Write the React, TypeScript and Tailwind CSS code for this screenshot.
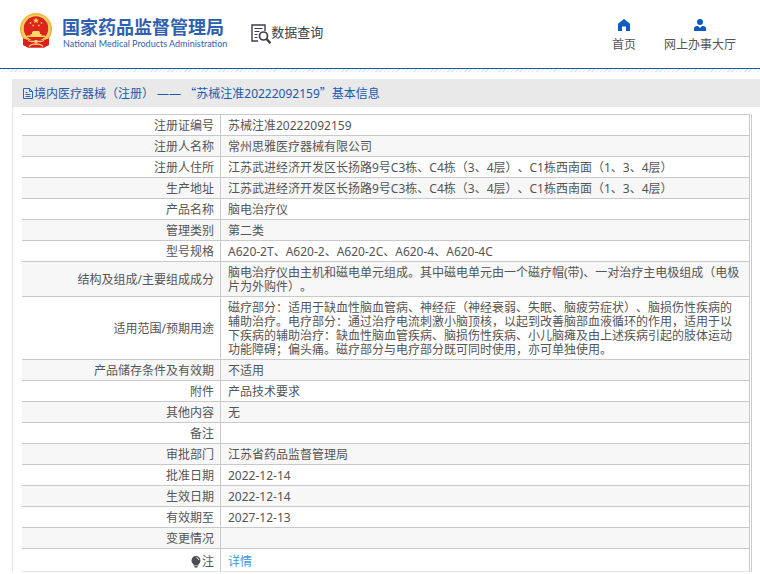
interface Row {
  label: string;
  value: string;
}

const ROWS: Row[] = [
  { label: "注册证编号", value: "苏械注准20222092159" },
  { label: "注册人名称", value: "常州思雅医疗器械有限公司" },
  { label: "注册人住所", value: "江苏武进经济开发区长扬路9号C3栋、C4栋（3、4层）、C1栋西南面（1、3、4层）" },
  { label: "生产地址", value: "江苏武进经济开发区长扬路9号C3栋、C4栋（3、4层）、C1栋西南面（1、3、4层）" },
  { label: "产品名称", value: "脑电治疗仪" },
  { label: "管理类别", value: "第二类" },
  { label: "型号规格", value: "A620-2T、A620-2、A620-2C、A620-4、A620-4C" },
  {
    label: "结构及组成/主要组成成分",
    value: "脑电治疗仪由主机和磁电单元组成。其中磁电单元由一个磁疗帽(带)、一对治疗主电极组成（电极片为外购件）。",
  },
  {
    label: "适用范围/预期用途",
    value:
      "磁疗部分：适用于缺血性脑血管病、神经症（神经衰弱、失眠、脑疲劳症状）、脑损伤性疾病的辅助治疗。电疗部分：通过治疗电流刺激小脑顶核，以起到改善脑部血液循环的作用，适用于以下疾病的辅助治疗：缺血性脑血管疾病、脑损伤性疾病、小儿脑瘫及由上述疾病引起的肢体运动功能障碍；偏头痛。磁疗部分与电疗部分既可同时使用，亦可单独使用。",
  },
  { label: "产品储存条件及有效期", value: "不适用" },
  { label: "附件", value: "产品技术要求" },
  { label: "其他内容", value: "无" },
  { label: "备注", value: "" },
  { label: "审批部门", value: "江苏省药品监督管理局" },
  { label: "批准日期", value: "2022-12-14" },
  { label: "生效日期", value: "2022-12-14" },
  { label: "有效期至", value: "2027-12-13" },
  { label: "变更情况", value: "" },
];

function Emblem() {
  return (
    <svg width="32" height="35" viewBox="0 0 32 35" aria-hidden="true">
      <path d="M3 22h26v10l-5 2.500H8L3 32z" fill="#d9201c" />
      <circle cx="16" cy="16" r="16" fill="#eeb53c" />
      <circle cx="16" cy="16" r="14.4" fill="#f5cf5e" />
      <circle cx="16" cy="15.5" r="12.2" fill="#dc231c" />
      <path d="M16 4.500l.9 2.100 2.200.1-1.700 1.400.6 2.200-2-1.200-2 1.200.6-2.200-1.700-1.400 2.200-.1z" fill="#f7d45c" />
      <g fill="#f3c44c">
        <circle cx="10.5" cy="10" r=".9" />
        <circle cx="21.5" cy="10" r=".9" />
        <circle cx="13.2" cy="12.4" r=".9" />
        <circle cx="18.8" cy="12.4" r=".9" />
      </g>
      <path d="M12 19.500l1-1.600h6l1 1.600v1.500h1.500v1.500H25V24H7v-1.500h3.500V21H12z" fill="#f9d966" />
      <path d="M3 25.500q6 2.500 13 .5 7 2 13-.5l-1 6.500-4 2.500H8L4 32z" fill="#d9201c" />
      <path d="M8 27.500q4 2 8 0 4 2 8 0M9 33.500q3-3.500 7-2 4-1.500 7 2" fill="none" stroke="#f5d27a" strokeWidth="1.300" />
      <circle cx="16" cy="29" r="1.800" fill="#f5d27a" />
    </svg>
  );
}

function SearchDocIcon() {
  return (
    <svg width="20" height="20" viewBox="0 0 20 20" fill="none" stroke="#3c4046" aria-hidden="true">
      <path d="M7 17H1V1h13v6" strokeWidth="1.400" />
      <path d="M3.500 4.500h8M3.500 7.500h5M3.500 10.500h3M3.500 13.500h3" strokeWidth="1.100" />
      <circle cx="12.500" cy="12" r="4" strokeWidth="1.700" />
      <path d="M15.500 15l4 4.200" strokeWidth="2.400" />
    </svg>
  );
}

function HomeIcon() {
  return (
    <svg width="12" height="12" viewBox="0 0 12 12" fill="#0b5cbc" aria-hidden="true">
      <path d="M6 0l6 4.800V12H8V7.500H4V12H0V4.800z" />
    </svg>
  );
}

function UserIcon() {
  return (
    <svg width="12" height="12" viewBox="0 0 12 12" fill="#0b5cbc" aria-hidden="true">
      <circle cx="6" cy="3" r="3" />
      <path d="M0 12V9.500Q0 7 3 7h1l2 2 2-2h1q3 0 3 2.500V12z" />
    </svg>
  );
}

function DocIcon() {
  return (
    <svg width="10" height="11" viewBox="0 0 10 11" fill="none" stroke="#2a66b5" aria-hidden="true">
      <path d="M.5.5h6l3 3v7h-9zM6.500.5v3h3M2.500 4.500h2M2.500 6.500h5M2.500 8.500h5" />
    </svg>
  );
}

function BulbIcon() {
  return (
    <svg width="10" height="12" viewBox="0 0 10 12" aria-hidden="true">
      <path d="M5 0a4.500 4.500 0 0 1 2.500 8.200V9.500h-5V8.200A4.500 4.500 0 0 1 5 0zM3.500 10h3v1.500h-3z" fill="#4c4f55" />
      <path d="M5.500 1.500q2 .4 2.300 2.500" fill="none" stroke="#fff" strokeWidth=".9" />
    </svg>
  );
}

export default function App() {
  return (
    <div className="bg-white font-['Noto_Sans','Noto_Sans_CJK_SC',sans-serif] text-xs text-[#555] [text-spacing-trim:space-all]">
      <header className="flex h-[69px] items-start justify-between border-b border-[#1b5ba3] pr-6 pl-5">
        <div className="flex items-start">
          <div className="flex gap-[10px] pt-[13px]">
            <Emblem />
            <div className="pt-1 text-[#305fae]">
              <h1 className="text-lg leading-5 font-bold">国家药品监督管理局</h1>
              <p className="pl-px font-[Lato,sans-serif] text-[9px] leading-[14px] whitespace-nowrap">
                National Medical Products Administration
              </p>
            </div>
          </div>
          <div className="ml-6 flex pt-6 text-[#3c4046]">
            <SearchDocIcon />
            <span className="text-[13px] leading-4">数据查询</span>
          </div>
        </div>
        <nav className="flex gap-7 pt-[19px]">
          <a href="#home" className="flex flex-col items-center gap-[6px]">
            <HomeIcon />
            首页
          </a>
          <a href="#hall" className="flex flex-col items-center gap-[6px]">
            <UserIcon />
            网上办事大厅
          </a>
        </nav>
      </header>
      <div className="h-[3px] bg-[repeating-linear-gradient(135deg,#d3e8f3_0px,#d3e8f3_1px,#fff_1px,#fff_3px)]" />

      <main className="mt-[7px] ml-3 border-l border-[#e6e6e6]">
        <h2 className="flex h-7 items-center gap-px bg-[#e9e9e9] pl-[10px] text-[#1c5aad]">
          <DocIcon />
          <span>
            境内医疗器械（注册） ——{" "}
            <span className="font-['Noto_Sans_CJK_SC',sans-serif]">“</span>
            苏械注准20222092159
            <span className="font-['Noto_Sans_CJK_SC',sans-serif]">”</span>
            基本信息
          </span>
        </h2>
        <div className="mt-[7px] mr-2 ml-[9px] border-r border-[#ccccd0] pr-px">
          <table className="w-full table-fixed border-separate border-spacing-0 border-t border-r border-[#c9c9cc] leading-[14px]">
            <colgroup>
              <col className="w-[199px]" />
              <col />
            </colgroup>
            <tbody>
              {ROWS.map(({ label, value }) => (
                <tr key={label} className="even:bg-[#f7f7f7]">
                  <th scope="row" className="border-r border-b border-[#c9c9cc] pt-1 pr-[6px] pb-[2px] text-right font-normal">
                    {label}
                  </th>
                  <td className="border-b border-[#c9c9cc] pt-1 pr-2 pb-[2px] pl-[7px]">{value}</td>
                </tr>
              ))}
              <tr>
                <th scope="row" className="border-r border-b border-r-[#c9c9cc] border-b-[#e6e6e6] pt-[6px] pr-[6px] pb-[2px] font-normal">
                  <span className="flex items-center justify-end gap-px">
                    <BulbIcon />注
                  </span>
                </th>
                <td className="border-b border-[#e6e6e6] pt-[6px] pr-2 pb-[2px] pl-[7px]">
                  <a href="#detail" className="text-[#4096dd]">
                    详情
                  </a>
                </td>
              </tr>
            </tbody>
          </table>
        </div>
      </main>
    </div>
  );
}
